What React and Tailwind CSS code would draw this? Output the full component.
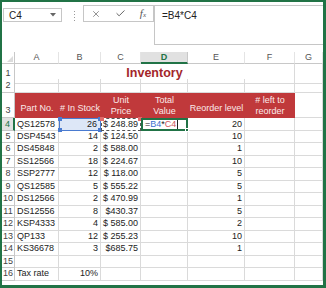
import { X, Check } from 'lucide-react';

const COLS = 'grid grid-cols-[13px_44px_42px_40px_47px_57px_50px_28px]';
const GRID = 'border-r border-b border-[#dadada] overflow-hidden whitespace-nowrap';
const RH = 'flex items-center justify-center border-r border-b border-[#c8c8c8] bg-white text-[#444] text-[9px] leading-none whitespace-nowrap';
const HEAD = 'bg-[#c0393b] text-[#fbe9e9] flex items-end justify-center text-center whitespace-nowrap';

const rows = [
    ['DSP4543', '14', '$ 124.50', '10'],
    ['DS45848', '2', '$ 588.00', '1'],
    ['SS12566', '18', '$ 224.67', '10'],
    ['SSP2777', '12', '$ 118.00', '5'],
    ['QS12585', '5', '$ 555.22', '5'],
    ['DS12566', '2', '$ 470.99', '1'],
    ['DS12556', '8', '$430.37', '5'],
    ['KSP4333', '4', '$ 585.00', '2'],
    ['QP133', '12', '$ 255.23', '10'],
    ['KS36678', '3', '$685.75', '1'],
];

function Corner({ className }) {
    return <span className={`absolute w-[4px] h-[4px] ${className}`} />;
}

function Toolbar() {
    return (
        <div className="h-[50px] flex items-start bg-white">
            <div className="mt-[6px] ml-px w-[59px] h-[14px] border border-[#c6c6c6] flex items-center justify-between pl-[5px] pr-[5px] text-[10px] text-[#222]">
                <span>C4</span>
                <svg width="6" height="4" viewBox="0 0 6 4"><path d="M0 0h6L3 3.5z" fill="#666" /></svg>
            </div>
            <div className="ml-[12px] mt-[9px] flex flex-col gap-[2px]">
                <span className="w-px h-px bg-[#999]" />
                <span className="w-px h-px bg-[#999]" />
                <span className="w-px h-px bg-[#999]" />
                <span className="w-px h-px bg-[#999]" />
            </div>
            <div className="ml-[8px] mt-[3px] w-[71px] h-[17px] border border-[#c6c6c6] flex items-center justify-around text-[#555]">
                <X className="w-[10px] h-[10px]" strokeWidth={1.5} />
                <Check className="w-[11px] h-[11px]" strokeWidth={2} />
                <span className="italic font-['Liberation_Serif',serif] text-[11px] leading-none">f<span className="text-[7px]">x</span></span>
            </div>
            <div className="mt-[3px] flex-1 h-[40px] border-y border-l border-[#c6c6c6] pl-[7px] pt-[2px] text-[10px] text-[#222]">
                =B4*C4
            </div>
        </div>
    );
}

function ColHeaders() {
    const letters = ['A', 'B', 'C', 'D', 'E', 'F', 'G'];
    return (
        <div className={`${COLS} h-[12px] text-[9px] leading-none`}>
            <div className="relative border-r border-b border-[#c8c8c8]">
                <svg className="absolute right-[1px] bottom-[1px]" width="6" height="6" viewBox="0 0 6 6"><path d="M6 0v6H0z" fill="#dcdcdc" /></svg>
            </div>
            {letters.map((l) =>
                l === 'D' ? (
                    <div key={l} className="flex items-center justify-center bg-[#e1e1e1] border-b-2 border-[#217346] text-[#217346] font-bold border-r border-r-[#c8c8c8]">{l}</div>
                ) : (
                    <div key={l} className="flex items-center justify-center text-[#555] border-r border-[#e4e4e4] border-b border-b-[#c8c8c8]">{l}</div>
                )
            )}
        </div>
    );
}

export default function App() {
    return (
        <div className="w-[326px] h-[288px] overflow-hidden bg-white border-l-2 border-t-2 border-r-[3px] border-b-[3px] border-[#217346] font-['Liberation_Sans',sans-serif]">
            <Toolbar />
            <ColHeaders />

            {/* row 1 */}
            <div className={`${COLS} h-[15px] text-[9px]`}>
                <div className={RH}>1</div>
                <div className="col-span-6 flex items-center justify-center border-r border-b border-[#dadada] text-[#a3262a] font-bold text-[12.5px]">Inventory</div>
                <div className={GRID} />
            </div>

            {/* row 2 */}
            <div className={`${COLS} h-[14px] text-[9px]`}>
                <div className={RH}>2</div>
                <div className={GRID} /><div className={GRID} /><div className={GRID} /><div className={GRID} /><div className={GRID} /><div className={GRID} /><div className={GRID} />
            </div>

            {/* row 3 */}
            <div className={`${COLS} h-[25px] text-[9px] leading-[11px]`}>
                <div className="flex items-end justify-center pb-[2px] border-r border-b border-[#c8c8c8] text-[#444] text-[9px] leading-none">3</div>
                <div className={`${HEAD} pb-[4px]`}>Part No.</div>
                <div className={`${HEAD} pb-[4px]`}># In Stock</div>
                <div className={`${HEAD} pb-[1px]`}>Unit<br />Price</div>
                <div className={`${HEAD} pb-[1px]`}>Total<br />Value</div>
                <div className={`${HEAD} pb-[4px]`}>Reorder level</div>
                <div className={`${HEAD} pb-[1px]`}># left to<br />reorder</div>
                <div className={GRID} />
            </div>

            {/* row 4 - editing */}
            <div className={`${COLS} h-[12.5px] text-[9px] leading-none text-[#222]`}>
                <div className="flex items-center justify-center bg-[#e1e1e1] border-r-2 border-[#217346] text-[#217346] border-b border-b-[#c8c8c8]">4</div>
                <div className={`${GRID} flex items-center pl-[2px]`}>QS12578</div>
                <div className="relative flex items-center justify-end pr-[3px] bg-[#dde7f7] border border-[#4a7bd0] whitespace-nowrap">
                    26
                    <Corner className="-left-[2px] -top-[2px] bg-[#4a7bd0]" />
                    <Corner className="-left-[2px] -bottom-[2px] bg-[#4a7bd0]" />
                    <Corner className="-right-[2px] -top-[2px] bg-[#4a7bd0]" />
                    <Corner className="-right-[2px] -bottom-[2px] bg-[#4a7bd0]" />
                </div>
                <div className="relative flex items-center justify-end pr-[2px] border border-dashed border-[#555] whitespace-nowrap">
                    $ 248.89
                    <Corner className="-left-[2px] -top-[2px] bg-[#e06a6a]" />
                    <Corner className="-right-[2px] -top-[2px] bg-[#e06a6a]" />
                </div>
                <div className="relative flex items-center pl-[2px] border-2 border-[#217346] whitespace-nowrap">
                    <span>=</span><span className="text-[#3c6fd0]">B4</span><span>*</span><span className="text-[#d0555a]">C4</span>
                    <span className="ml-px w-px h-[9px] bg-[#222]" />
                    <span className="absolute -right-[3px] -bottom-[3px] w-[4px] h-[4px] bg-[#217346] border border-white" />
                </div>
                <div className={`${GRID} flex items-center justify-end pr-[2px]`}>20</div>
                <div className={GRID} />
                <div className={GRID} />
            </div>

            {rows.map((r, i) => (
                <div key={i} className={`${COLS} h-[12.5px] text-[9px] leading-none text-[#222]`}>
                    <div className={RH}>{i + 5}</div>
                    <div className={`${GRID} flex items-center pl-[2px]`}>{r[0]}</div>
                    <div className={`${GRID} flex items-center justify-end pr-[2px]`}>{r[1]}</div>
                    <div className={`${GRID} flex items-center justify-end pr-[2px]`}>{r[2]}</div>
                    <div className={GRID} />
                    <div className={`${GRID} flex items-center justify-end pr-[2px]`}>{r[3]}</div>
                    <div className={GRID} />
                    <div className={GRID} />
                </div>
            ))}

            {/* row 15 */}
            <div className={`${COLS} h-[12.5px] text-[9px] leading-none text-[#222]`}>
                <div className={RH}>15</div>
                <div className={GRID} /><div className={GRID} /><div className={GRID} /><div className={GRID} /><div className={GRID} /><div className={GRID} /><div className={GRID} />
            </div>

            {/* row 16 */}
            <div className={`${COLS} h-[12.5px] text-[9px] leading-none text-[#222]`}>
                <div className={RH}>16</div>
                <div className={`${GRID} flex items-center pl-[2px]`}>Tax rate</div>
                <div className={`${GRID} flex items-center justify-end pr-[2px]`}>10%</div>
                <div className={GRID} /><div className={GRID} /><div className={GRID} /><div className={GRID} /><div className={GRID} />
            </div>
        </div>
    );
}
